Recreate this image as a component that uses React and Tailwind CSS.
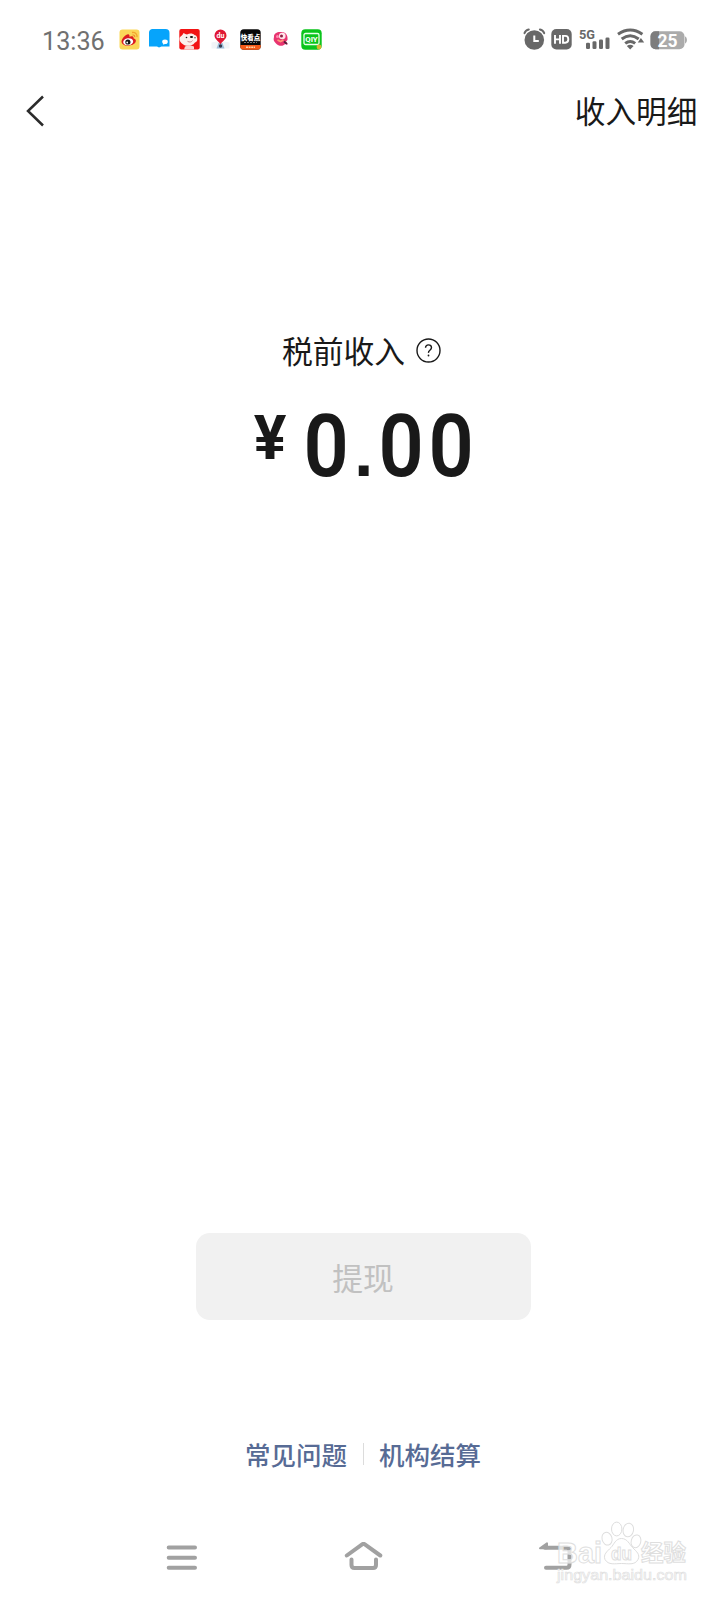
const SANS = "font-['Roboto','Noto_Sans_CJK_SC',sans-serif]";
const CJK = "font-['Noto_Sans_CJK_SC',sans-serif]";

function WeiboIcon() {
  return (
    <svg className="size-[21px]" viewBox="0 0 21 21">
      <rect x="0.5" y="0.5" width="20" height="20" rx="3" fill="#fbd759" />
      <path d="M13 3.500c3-.7 5.600 1.700 5 4.700" fill="none" stroke="#f3a52e" strokeWidth="1.300" />
      <path d="M13.500 6c1.400-.3 2.500.8 2.200 2.200" fill="none" stroke="#e98a2a" strokeWidth="1.100" />
      <path d="M2.500 12.500C3 9 7.500 4.500 9.800 5.500c.9.400.8 1.500.5 2.300 2-.9 4.700-.7 4.200 1.500 2.300.7 2.800 2 2.100 3.800C15 17.500 3 18.500 2.500 12.500z" fill="#dc1b20" />
      <ellipse cx="9.200" cy="12.800" rx="5" ry="3.500" fill="#fff" transform="rotate(-8 9.200 12.800)" />
      <circle cx="8.900" cy="13" r="2.600" fill="#151515" />
      <circle cx="8.200" cy="13.500" r="0.900" fill="#fff" />
    </svg>
  );
}

function ChatIcon() {
  return (
    <svg className="size-[21px]" viewBox="0 0 21 21">
      <path d="M3.500 0h13a4 4 0 0 1 4 4v13.500h-8l-2.500 1-2-1h-8V4a4 4 0 0 1 3-4z" fill="#06a4fb" />
      <ellipse cx="16" cy="12.800" rx="2.800" ry="2.300" fill="#fff" />
      <path d="M14 14l.3 1.800 2-1z" fill="#fff" />
    </svg>
  );
}

function DogIcon() {
  return (
    <svg className="size-[21px]" viewBox="0 0 21 21">
      <rect x="0.300" y="0" width="20.400" height="20.500" rx="2" fill="#f21414" />
      <path d="M.5 10C.5 7 3 7.500 4.500 4c1.500.5 2 1.500 3.500 1.500 3-1.500 6-1 7.500.5 2 0 3.500 3 2.500 6-1 1.500-2 1-2.500 2-2 3.500-9 3.500-11.500 1.200C2 14 .5 12.500.5 10z" fill="#fbf0ec" />
      <path d="M6 17.500c3-1.500 6-1.500 9 0v3H5z" fill="#f7d9d4" />
      <circle cx="7.500" cy="8.500" r="0.800" fill="#222" />
      <ellipse cx="12.500" cy="8" rx="1.600" ry="1.100" fill="#111" />
      <circle cx="16" cy="8.800" r="0.700" fill="#333" />
      <path d="M8.500 12.300c2 1.200 4 .8 5-.7" stroke="#c88" fill="none" />
    </svg>
  );
}

function MapPinIcon() {
  return (
    <svg className="size-[21px]" viewBox="0 0 21 21">
      <path d="M1.500 13.500l5-1h8l5 1v6h-18z" fill="#f1f4f7" />
      <path d="M8.500 14h4l2 5.500h-8z" fill="#9dbdd8" />
      <path d="M10.500 15.500C9.500 12.500 4.500 10.500 4.500 6.500a6 6 0 0 1 12 0c0 4-5 6-6 9z" fill="#e01834" />
      <circle cx="10.500" cy="17" r="1.700" fill="#343b50" />
      <text x="10.500" y="9" textAnchor="middle" fontSize="7" fontWeight="700" fill="#fff">du</text>
    </svg>
  );
}

function ComicIcon() {
  return (
    <svg className="size-[21px]" viewBox="0 0 21 21">
      <rect x="0.300" y="0.300" width="20.400" height="20.400" rx="3.500" fill="#080808" />
      <path d="M.3 16h20.400v1.200a3.500 3.500 0 0 1-3.500 3.500H3.800a3.500 3.500 0 0 1-3.500-3.500z" fill="#f55a18" />
      <text x="10.500" y="11" textAnchor="middle" fontSize="6.500" fontWeight="900" fill="#fff" fontFamily="Noto Sans CJK SC">快看点</text>
      <path d="M4 13.500h13" stroke="#999" strokeWidth="0.800" strokeDasharray="2 1" />
      <path d="M6 18.300h9" stroke="#ffd4a8" strokeWidth="1.500" strokeDasharray="2 .6" />
    </svg>
  );
}

function BirdIcon() {
  return (
    <svg className="size-[21px]" viewBox="0 0 21 21">
      <path d="M4 8C3.500 4 8 2.500 11 3c5 0 7 3.500 6.500 8l-1.500 1.500 2 3-3-.5c-1.500 2.500-6.500 2.500-9-.5C4 12.500 3 11 4 8z" fill="#e83470" />
      <circle cx="7.500" cy="7.500" r="1.500" fill="#ff8db0" />
      <circle cx="12.300" cy="7" r="3.300" fill="#ffe5ec" />
      <circle cx="11.500" cy="7" r="1.500" fill="#8d2143" />
      <path d="M7.500 11l3 1.500 3-1.500" stroke="#ff9c76" strokeWidth="1.600" fill="none" />
      <path d="M14 12.500l3 2.500" stroke="#54203a" strokeWidth="1.800" />
    </svg>
  );
}

function DiyIcon() {
  return (
    <svg className="size-[21px]" viewBox="0 0 21 21">
      <rect x="0.300" y="0.300" width="20.400" height="20.400" rx="4" fill="#0bc41c" />
      <rect x="3" y="4.500" width="15" height="11" rx="1.500" fill="none" stroke="#e8ffe8" strokeWidth="1.300" />
      <text x="10.500" y="13" textAnchor="middle" fontSize="7.800" fontWeight="700" fill="#fff">QIY</text>
      <circle cx="18" cy="18" r="2.400" fill="#d8b52c" />
    </svg>
  );
}

function StatusIcons() {
  return (
    <div className="flex items-center text-[#686868]">
      <svg className="h-[22px] w-[23px]" viewBox="0 0 23 22" fill="none" stroke="currentColor">
        <circle cx="11.300" cy="12" r="9.800" fill="currentColor" stroke="none" />
        <path d="M1.500 5.200Q2.500 2.300 5.800 1.500M21.200 5.200Q20.200 2.300 16.900 1.500" strokeWidth="2" strokeLinecap="round" />
        <path d="M11.300 7.500v5.500h4.500" stroke="#fff" strokeWidth="2" />
      </svg>
      <svg className="ml-[5px] h-[22px] w-[21px]" viewBox="0 0 21 22">
        <rect x="0.300" y="1" width="20.400" height="20.400" rx="5" fill="currentColor" />
        <path d="M4 7v8.700M9 7v8.700M4 11.400h5M12 7.900h2.300q3 0 3 3.400t-3 3.400H12z" fill="none" stroke="#fff" strokeWidth="1.900" />
      </svg>
      <svg className="ml-[6px] h-[22px] w-[32px]" viewBox="0 0 32 22">
        <text x="1" y="10.500" fontSize="13.500" fontWeight="700" textLength="16" lengthAdjust="spacingAndGlyphs" fill="currentColor">5G</text>
        <g fill="currentColor">
          <rect x="8" y="14.800" width="4" height="6.200" rx="1.300" />
          <rect x="14.500" y="13.300" width="4" height="7.700" rx="1.300" />
          <rect x="21" y="11.500" width="4" height="9.500" rx="1.300" />
          <rect x="27.500" y="9.500" width="4" height="11.500" rx="1.300" />
        </g>
      </svg>
      <svg className="ml-[7px] h-[22px] w-[28px]" viewBox="0 0 28 22" fill="none" stroke="currentColor" strokeWidth="3">
        <path d="M1 6.200Q13.200-2.200 25.400 6.200M4.700 11Q13.200 4.600 21.700 11M8.200 15.400Q13.200 11.600 18.200 15.400" />
        <path d="M9.800 18q3.400-2.600 6.800 0L13.200 21.500z" fill="currentColor" stroke="none" />
        <path d="M20.800 14.600l3.100-4.600 3.300 4.600z" fill="currentColor" stroke="none" />
      </svg>
      <svg className="ml-[5px] h-[22px] w-[37px]" viewBox="0 0 37 22">
        <rect x="0.500" y="3.300" width="34" height="18" rx="5" fill="#ababab" />
        <path d="M9 3.300H5.500a5 5 0 0 0-5 5v8a5 5 0 0 0 5 5H9z" fill="#7d7d7d" />
        <path d="M35 8.300q2 1 2 3.700t-2 3.700z" fill="#ababab" />
        <text x="17.500" y="18.500" textAnchor="middle" fontSize="17.500" fontWeight="700" fill="#fff">25</text>
      </svg>
    </div>
  );
}

function Watermark() {
  return (
    <svg
      className="pointer-events-none absolute right-[36px] bottom-[10px] h-[72px] w-[136px]"
      viewBox="0 0 136 72"
      fill="#fff"
      stroke="#dedede"
      strokeWidth="1"
    >
      <g fontFamily="Liberation Sans, sans-serif" fontWeight="700">
        <text x="2" y="44.500" fontSize="30" textLength="45" lengthAdjust="spacingAndGlyphs" fillOpacity="0.7">Bai</text>
        <ellipse cx="52" cy="20.700" rx="5" ry="6.500" transform="rotate(-15 52 20.700)" />
        <ellipse cx="61.700" cy="11" rx="5.200" ry="6.900" />
        <ellipse cx="73.300" cy="12" rx="5.200" ry="6.900" transform="rotate(10 73.300 12)" />
        <ellipse cx="81" cy="23.300" rx="4.800" ry="6.500" transform="rotate(15 81 23.300)" />
        <path d="M66.500 20.500c6 0 8 6 11 9 4 4 8 7 5.500 12-3 6-10 4-16.500 4s-13 2-16.500-4c-2-5 2-8 6-12 3-3 4.500-9 10.500-9z" />
        <text x="56" y="42" fontSize="19" textLength="21" lengthAdjust="spacingAndGlyphs">du</text>
      </g>
      <text x="86" y="43" fontSize="22.500" fontWeight="700" fontFamily="Noto Sans CJK SC, sans-serif">经验</text>
      <text x="2" y="62" fontSize="15" textLength="130" strokeWidth="0.600" fill="#fafafa" lengthAdjust="spacingAndGlyphs" fontFamily="Liberation Sans, sans-serif">jingyan.baidu.com</text>
    </svg>
  );
}

function NavBar() {
  return (
    <nav className="relative flex h-[86px] items-center pt-[2px] pl-[165px] text-[#a1a1a1]">
      <svg className="h-8 w-8" viewBox="0 0 32 32" stroke="currentColor" strokeWidth="4" strokeLinecap="round">
        <path d="M3.700 5.500h26.300M3.700 15.700h26.300M3.700 25.700h26.300" />
      </svg>
      <svg className="ml-[147px] h-8 w-10" viewBox="0 0 40 32" fill="none" stroke="currentColor" strokeWidth="4" strokeLinecap="round" strokeLinejoin="round">
        <path d="M2.800 13.500L18.500 2.200q1-.7 2 0L36.300 13.500M7.500 17.500v5.500q0 3 3 3h18.500q3 0 3-3v-5.500" />
      </svg>
      <svg className="ml-[153px] h-8 w-9" viewBox="0 0 36 32" fill="none" stroke="currentColor" strokeWidth="4" strokeLinecap="round" strokeLinejoin="round">
        <path d="M8 5.800h21.500q3 0 3 3v14q0 3-3 3H9" />
        <path d="M3 6.300L10 1.300v5z" strokeWidth="2" fill="currentColor" />
      </svg>
      <Watermark />
    </nav>
  );
}

function Amount() {
  return (
    <div className="mt-[34px] flex items-start pl-[3px]">
      <span className="mt-[6px] mr-[15px] text-[61px] leading-none font-bold">¥</span>
      <div className="flex items-baseline text-[88px] leading-none font-semibold">
        <span className="inline-block scale-x-[0.9]">0</span>
        <span className="inline-block w-[24px] text-center font-['Liberation_Sans',sans-serif] text-[70px] font-bold">.</span>
        <span className="inline-block scale-x-[0.9]">0</span>
        <span className="inline-block scale-x-[0.9]">0</span>
      </div>
    </div>
  );
}

export default function App() {
  return (
    <div className={`flex h-[1600px] w-[727px] flex-col overflow-hidden bg-white text-[#191919] ${SANS}`}>
      <div className="flex h-[78px] items-center justify-between pr-[40px] pl-[42px]">
        <div className="flex items-center">
          <span className="mt-[5px] w-[76.500px] text-[25.200px] leading-none text-[#707070]">13:36</span>
          <div className="mt-px flex items-center gap-[9.400px]">
            <WeiboIcon />
            <ChatIcon />
            <DogIcon />
            <MapPinIcon />
            <ComicIcon />
            <BirdIcon />
            <DiyIcon />
          </div>
        </div>
        <StatusIcons />
      </div>

      <header className="flex h-[66px] items-center justify-between pr-[29.500px] pl-[25px]">
        <button>
          <svg className="h-8 w-5" viewBox="0 0 20 32" fill="none" stroke="#2b2b2b" strokeWidth="2.500">
            <path d="M18 1.500L3 16l15 14.500" />
          </svg>
        </button>
        <button className={`pb-px text-[30.700px] leading-none ${CJK}`}>收入明细</button>
      </header>

      <main className="flex flex-1 flex-col items-center">
        <div className="mt-[188px] mr-[4px] flex h-[36px] items-center gap-[11px]">
          <h1 className={`text-[30.800px] leading-none ${CJK}`}>税前收入</h1>
          <svg className="size-[25px]" viewBox="0 0 25 25" fill="none" stroke="currentColor" strokeWidth="1.400">
            <circle cx="12.500" cy="12.500" r="11.500" />
            <path d="M9.500 9.800q.2-2.900 3-2.900t3 2.600q0 1.500-1.600 2.700t-1.400 2.600" />
            <circle cx="12.500" cy="17.500" r="0.900" fill="currentColor" stroke="none" />
          </svg>
        </div>
        <Amount />
        <button className={`mt-auto mr-px h-[87px] w-[335px] rounded-[14px] bg-[#f1f1f1] pt-[2px] text-[30.800px] leading-none text-[#c1c1c1] ${CJK}`}>
          提现
        </button>
        <div className={`mt-[117px] mr-px mb-[43px] flex h-[34px] items-center text-[25.500px] leading-none font-medium text-[#576b95] ${CJK}`}>
          <a>常见问题</a>
          <span className="mx-[15.500px] h-[22px] w-px bg-[#dcdcdc]" />
          <a>机构结算</a>
        </div>
      </main>

      <NavBar />
    </div>
  );
}
